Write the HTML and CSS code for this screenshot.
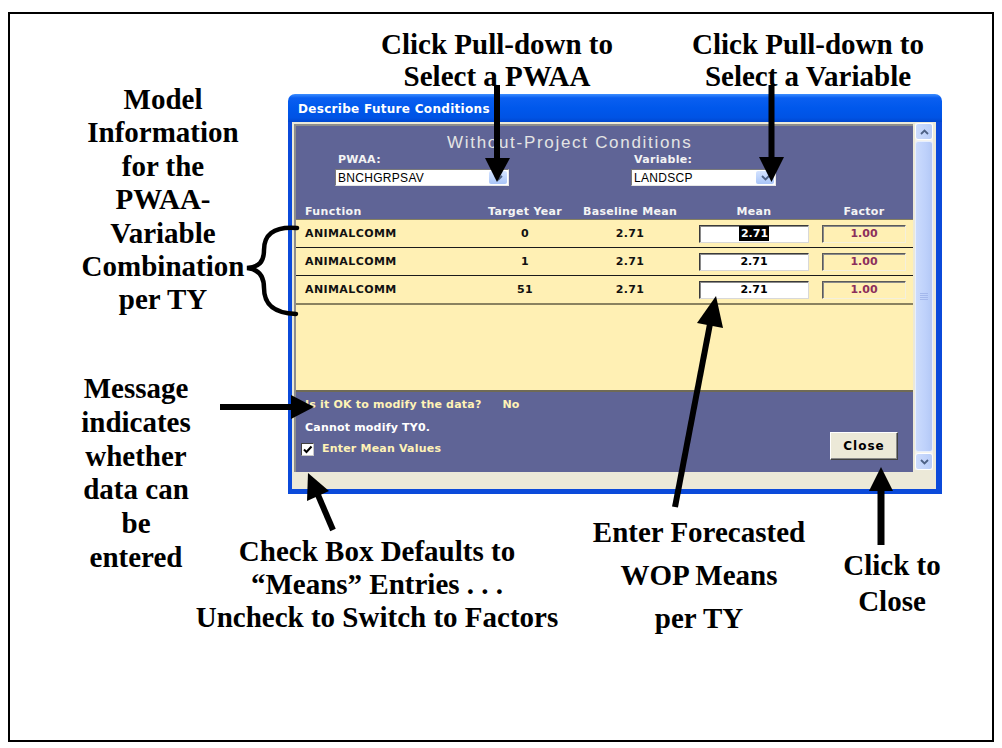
FILE: index.html
```html
<!DOCTYPE html>
<html>
<head>
  <title>Describe Future Conditions</title>
  <link rel="stylesheet" href="styles.css">
</head>
<body>
<div class="slide">
  <div class="note n-pwaa">Click Pull-down to<br>Select a PWAA</div>
  <div class="note n-var">Click Pull-down to<br>Select a Variable</div>
  <div class="note n-model">Model<br>Information<br>for the<br>PWAA-<br>Variable<br>Combination<br>per TY</div>
  <div class="note n-msg">Message<br>indicates<br>whether<br>data can<br>be<br>entered</div>
  <div class="note n-check">Check Box Defaults to<br>“Means” Entries . . .<br>Uncheck to Switch to Factors</div>
  <div class="note n-enter">Enter Forecasted<br>WOP Means<br>per TY</div>
  <div class="note n-close">Click to<br>Close</div>

  <div class="window">
    <div class="titlebar">Describe Future Conditions</div>
    <div class="client">
      <div class="body">
        <div class="form">
          <div class="head">
            <div class="caption">Without-Project Conditions</div>
            <div class="pickers">
              <div class="picker pwaa">
                <div class="plabel">PWAA:</div>
                <div class="combo">
                  <span>BNCHGRPSAV</span>
                  <span class="drop"><svg width="9" height="6" viewBox="0 0 9 6"><path d="M1 1l3.5 3.5L8 1" fill="none" stroke="#4d6185" stroke-width="1.8"/></svg></span>
                </div>
              </div>
              <div class="picker var">
                <div class="plabel">Variable:</div>
                <div class="combo">
                  <span>LANDSCP</span>
                  <span class="drop"><svg width="9" height="6" viewBox="0 0 9 6"><path d="M1 1l3.5 3.5L8 1" fill="none" stroke="#4d6185" stroke-width="1.8"/></svg></span>
                </div>
              </div>
            </div>
            <div class="grid cols">
              <span class="fn">Function</span>
              <span class="c">Target Year</span>
              <span class="c">Baseline Mean</span>
              <span class="c in">Mean</span>
              <span class="c in">Factor</span>
            </div>
          </div>

          <div class="grid row">
            <span class="fn">ANIMALCOMM</span>
            <span class="c">0</span>
            <span class="c">2.71</span>
            <span class="in"><span class="mean"><span class="sel">2.71</span></span></span>
            <span class="in"><span class="factor">1.00</span></span>
          </div>
          <div class="grid row">
            <span class="fn">ANIMALCOMM</span>
            <span class="c">1</span>
            <span class="c">2.71</span>
            <span class="in"><span class="mean">2.71</span></span>
            <span class="in"><span class="factor">1.00</span></span>
          </div>
          <div class="grid row last">
            <span class="fn">ANIMALCOMM</span>
            <span class="c">51</span>
            <span class="c">2.71</span>
            <span class="in"><span class="mean">2.71</span></span>
            <span class="in"><span class="factor">1.00</span></span>
          </div>
          <div class="blank"></div>

          <div class="foot">
            <div class="msgs">
              <div class="msg ask">Is it OK to modify the data?<span class="no">No</span></div>
              <div class="msg info">Cannot modify TY0.</div>
              <div class="chk">
                <span class="box"><svg width="11" height="11" viewBox="0 0 11 11"><path d="M2 5.5l2.5 2.5L9.5 2.5" fill="none" stroke="#000" stroke-width="2"/></svg></span>
                Enter Mean Values
              </div>
            </div>
            <div class="close">Close</div>
          </div>
        </div>

        <div class="scroll">
          <div class="sbtn"><svg width="9" height="6" viewBox="0 0 9 6"><path d="M1 5l3.5-3.5L8 5" fill="none" stroke="#4d6185" stroke-width="1.8"/></svg></div>
          <div class="thumb"><svg width="8" height="7" viewBox="0 0 8 7"><path d="M0 .5h8M0 2.5h8M0 4.5h8M0 6.5h8" stroke="#a4b8ec" stroke-width="1"/></svg></div>
          <div class="sbtn"><svg width="9" height="6" viewBox="0 0 9 6"><path d="M1 1l3.5 3.5L8 1" fill="none" stroke="#4d6185" stroke-width="1.8"/></svg></div>
        </div>
      </div>
      <div class="status"></div>
    </div>
  </div>

  <svg class="marks" width="1002" height="748" viewBox="0 0 1002 748">
    <g stroke="#000" fill="none">
      <line x1="497" y1="85" x2="497" y2="160" stroke-width="6"/>
      <line x1="771.5" y1="85" x2="771.5" y2="159" stroke-width="6"/>
      <line x1="220" y1="407" x2="294" y2="407" stroke-width="6"/>
      <line x1="333" y1="530" x2="318" y2="495" stroke-width="6"/>
      <line x1="675" y1="507" x2="710" y2="324" stroke-width="6"/>
      <line x1="881" y1="545" x2="881" y2="489" stroke-width="7"/>
      <path d="M297 228C272 226 264 236 264 250C264 262 259 267 247 268C259 269 264 276 264 288C264 302 271 313 296 314" stroke-width="4.5" stroke-linecap="round"/>
    </g>
    <g fill="#000">
      <polygon points="485,158 510,158 497,182"/>
      <polygon points="759,157 784,157 771.5,182"/>
      <polygon points="291,395 291,419 314,407"/>
      <polygon points="308,473 329,491 307,501"/>
      <polygon points="716,296 723,328 697,323"/>
      <polygon points="869,491 893,491 881,467"/>
    </g>
  </svg>
</div>
</body>
</html>
```

FILE: styles.css
```css
body {
  margin: 0;
  background: #fff;
}

.slide {
  position: relative;
  width: 1002px;
  height: 748px;
  overflow: hidden;
  font-family: "Liberation Serif", "Times New Roman", serif;
}

/* the slide frame */
.slide::before {
  content: "";
  position: absolute;
  left: 8px;
  top: 12px;
  right: 8px;
  bottom: 6px;
  border: 2px solid #000;
}

.note {
  position: absolute;
  font-size: 29px;
  font-weight: bold;
  text-align: center;
  color: #000;
  white-space: nowrap;
}

.n-pwaa { left: 367px; top: 28px; width: 260px; line-height: 32px; }
.n-var { left: 678px; top: 28px; width: 260px; line-height: 32px; }
.n-model { left: 63px; top: 83px; width: 200px; line-height: 33.4px; }
.n-msg { left: 36px; top: 372px; width: 200px; line-height: 33.8px; }
.n-check { left: 177px; top: 535px; width: 400px; line-height: 33px; }
.n-enter { left: 579px; top: 511px; width: 240px; line-height: 43px; }
.n-close { left: 832px; top: 547px; width: 120px; line-height: 36px; }

.marks {
  position: absolute;
  left: 0;
  top: 0;
  pointer-events: none;
}

/* the application window */
.window {
  position: absolute;
  left: 288px;
  top: 94px;
  width: 654px;
  height: 400px;
  font-family: "DejaVu Sans", Verdana, sans-serif;
  font-size: 11px;
  font-weight: bold;
}

.titlebar {
  height: 28px;
  box-sizing: border-box;
  padding: 7px 0 0 10px;
  border-radius: 7px 7px 0 0;
  background: linear-gradient(#3d8eff, #0a5ff1 14%, #0058ec 50%, #0053e4 85%, #0046cf);
  color: #fff;
  font-size: 12px;
  line-height: 16px;
  letter-spacing: 0.3px;
}

.client {
  height: 372px;
  box-sizing: border-box;
  display: flex;
  flex-direction: column;
  background: #ece9d8;
  border: solid #0b4ada;
  border-width: 0 6px 5px 4px;
}

.body {
  flex: 1;
  display: flex;
  padding: 2px 3px 0 2px;
}

.form {
  width: 617px;
  border-left: 2px solid #8d8d8d;
  border-top: 2px solid #8d8d8d;
  background: #fff0b4;
  display: flex;
  flex-direction: column;
}

.head {
  height: 93px;
  background: #5f6496;
  border-bottom: 1px solid #86805f;
  color: #f4f4f4;
}

.caption {
  margin-top: 6px;
  padding-left: 151px;
  font-family: "Liberation Sans", Arial, sans-serif;
  font-size: 17px;
  font-weight: normal;
  line-height: 22px;
  letter-spacing: 1.7px;
  color: #e4e4e4;
}

.pickers {
  display: flex;
  padding-left: 39px;
}

.picker.pwaa { width: 174px; }
.picker.var { width: 145px; margin-left: 122px; }

.plabel {
  line-height: 12px;
  padding-left: 3px;
  font-size: 11px;
  letter-spacing: 0.3px;
}

.combo {
  margin-top: 3px;
  height: 17px;
  box-sizing: border-box;
  display: flex;
  align-items: center;
  justify-content: space-between;
  padding-left: 2px;
  background: #fff;
  border: 1px solid;
  border-color: #7a7a7a #e6e6e6 #e6e6e6 #7a7a7a;
  font-family: "Liberation Sans", Arial, sans-serif;
  font-size: 12px;
  font-weight: normal;
  letter-spacing: 0.3px;
  color: #000;
}

.drop {
  width: 18px;
  height: 13px;
  margin-right: 1px;
  display: flex;
  align-items: center;
  justify-content: center;
  border-radius: 2px;
  background: linear-gradient(#d4e3ff, #a9c5f8);
}

.grid {
  display: grid;
  grid-template-columns: 180px 98px 112px 123px 97px;
  align-items: center;
}

.grid .fn { padding-left: 9px; letter-spacing: 0.4px; }
.grid .c { text-align: center; letter-spacing: 0.3px; }
.grid .in { padding-left: 13px; }

.cols {
  margin-top: 19px;
  line-height: 14px;
}

.row {
  height: 27px;
  border-bottom: 1px solid #1a1a1a;
  color: #111;
}

.row.last {
  height: 27px;
  border-bottom: 2px solid #8a8260;
}

.mean,
.factor {
  display: block;
  height: 18px;
  box-sizing: border-box;
  border: 1px solid;
  border-color: #3a3a3a #d8d8d8 #d8d8d8 #3a3a3a;
  box-shadow: inset 1px 1px 0 #8a8a8a;
  text-align: center;
  line-height: 16px;
}

.mean {
  width: 110px;
  background: #fff;
  color: #000;
}

.sel {
  background: #000;
  color: #fff;
  padding: 1px 1px 1px 2px;
}

.factor {
  width: 84px;
  background: #fff0b4;
  color: #8c2f5c;
  border-color: #5a5a5a #f4f0dc #f4f0dc #5a5a5a;
}

.blank {
  flex: 1;
  border-bottom: 2px solid #6f6a55;
}

.foot {
  height: 80px;
  box-sizing: border-box;
  display: flex;
  justify-content: space-between;
  padding: 6px 15px 12px 9px;
  background: #5f6496;
}

.msg {
  line-height: 14px;
  letter-spacing: 0.2px;
}

.ask { color: #fff3b6; }
.no { margin-left: 21px; }

.info {
  margin-top: 9px;
  color: #fff;
}

.chk {
  margin: 7px 0 0 -4px;
  display: flex;
  align-items: center;
  gap: 8px;
  line-height: 14px;
  color: #fff3b6;
  letter-spacing: 0.2px;
}

.box {
  width: 13px;
  height: 13px;
  box-sizing: border-box;
  display: flex;
  align-items: center;
  justify-content: center;
  background: #fff;
  border: 1px solid;
  border-color: #404040 #c8c8c8 #c8c8c8 #404040;
}

.close {
  align-self: flex-end;
  width: 68px;
  height: 28px;
  box-sizing: border-box;
  display: flex;
  align-items: center;
  justify-content: center;
  background: #ece9d8;
  border: 1px solid;
  border-color: #fff #404040 #404040 #fff;
  box-shadow: inset -1px -1px 0 #8a8a8a;
  font-size: 12px;
  letter-spacing: 1px;
  color: #000;
}

.scroll {
  width: 18px;
  margin: -1px 0 2px 2px;
  display: flex;
  flex-direction: column;
  background: #f4f3ee;
}

.sbtn {
  height: 17px;
  box-sizing: border-box;
  display: flex;
  align-items: center;
  justify-content: center;
  border: 1px solid #fff;
  border-radius: 3px;
  background: linear-gradient(90deg, #cddcfd, #b9cdf8);
}

.thumb {
  flex: 1;
  margin: 1px 0;
  display: flex;
  align-items: center;
  justify-content: center;
  border: 1px solid #e8effe;
  border-radius: 3px;
  background: linear-gradient(90deg, #cbdbfd, #bed1fb 60%, #b3c8f6);
}

.status {
  height: 17px;
}
```
